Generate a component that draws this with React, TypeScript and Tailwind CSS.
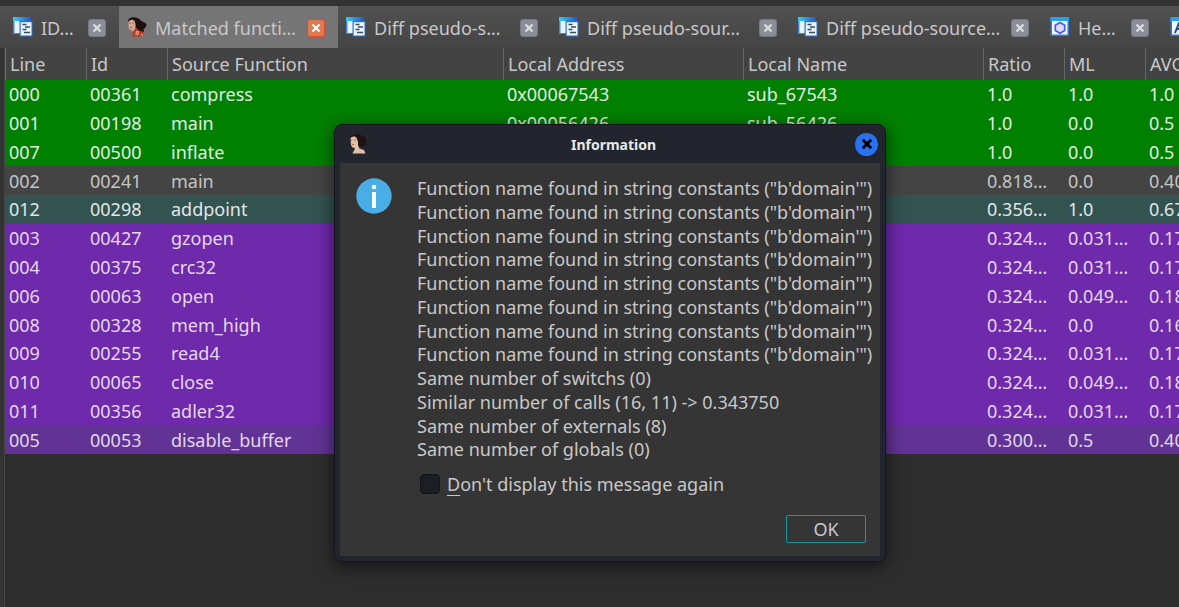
import React from "react";

type Row = { line: string; id: string; fn: string; addr?: string; name?: string; ratio: string; ml: string; avg: string; tone: string };

const GREEN = "bg-[#008000] text-[#e0ece0]";
const GRAY = "bg-[#444444] text-[#c4c4c4]";
const TEAL = "bg-[#335350] text-[#e2e6e6]";
const PURPLE = "bg-[#6f29ab] text-[#e4d8ec]";
const DIM = "bg-[#613394] text-[#e0d8ea]";

const rows: Row[] = [
  { line: "000", id: "00361", fn: "compress", addr: "0x00067543", name: "sub_67543", ratio: "1.0", ml: "1.0", avg: "1.0", tone: GREEN },
  { line: "001", id: "00198", fn: "main", addr: "0x00056426", name: "sub_56426", ratio: "1.0", ml: "0.0", avg: "0.5", tone: GREEN },
  { line: "007", id: "00500", fn: "inflate", ratio: "1.0", ml: "0.0", avg: "0.5", tone: GREEN },
  { line: "002", id: "00241", fn: "main", ratio: "0.818…", ml: "0.0", avg: "0.40", tone: GRAY },
  { line: "012", id: "00298", fn: "addpoint", ratio: "0.356…", ml: "1.0", avg: "0.67", tone: TEAL },
  { line: "003", id: "00427", fn: "gzopen", ratio: "0.324…", ml: "0.031…", avg: "0.17", tone: PURPLE },
  { line: "004", id: "00375", fn: "crc32", ratio: "0.324…", ml: "0.031…", avg: "0.17", tone: PURPLE },
  { line: "006", id: "00063", fn: "open", ratio: "0.324…", ml: "0.049…", avg: "0.18", tone: PURPLE },
  { line: "008", id: "00328", fn: "mem_high", ratio: "0.324…", ml: "0.0", avg: "0.16", tone: PURPLE },
  { line: "009", id: "00255", fn: "read4", ratio: "0.324…", ml: "0.031…", avg: "0.17", tone: PURPLE },
  { line: "010", id: "00065", fn: "close", ratio: "0.324…", ml: "0.049…", avg: "0.18", tone: PURPLE },
  { line: "011", id: "00356", fn: "adler32", ratio: "0.324…", ml: "0.031…", avg: "0.17", tone: PURPLE },
  { line: "005", id: "00053", fn: "disable_buffer", ratio: "0.300…", ml: "0.5", avg: "0.40", tone: DIM },
];

const headers = ["Line", "Id", "Source Function", "Local Address", "Local Name", "Ratio", "ML", "AVG"];

const messages = [
  ...Array<string>(8).fill(`Function name found in string constants ("b'domain'")`),
  "Same number of switchs (0)",
  "Similar number of calls (16, 11) -> 0.343750",
  "Same number of externals (8)",
  "Same number of globals (0)",
];

function DocIcon() {
  return (
    <svg viewBox="0 0 20 20" className="size-5 shrink-0" aria-hidden="true">
      <defs>
        <linearGradient id="bar" x1="0" x2="1">
          <stop offset="0" stopColor="#35d0f5" />
          <stop offset="1" stopColor="#2256c8" />
        </linearGradient>
      </defs>
      <rect x="0" y="0" width="18" height="17" fill="#3c86dc" />
      <rect x="0" y="0" width="18" height="4" fill="url(#bar)" />
      <rect x="1.5" y="4" width="15" height="12" fill="#e6f5ff" />
      <path d="M6.500 4H19.500V19.500H6.500z" fill="#2e70c4" />
      <path d="M7.700 5.200H18.500V18.500H7.700z" fill="#eaf5fd" />
      <path d="M9.500 7.500h4M12 10h5M9.500 12.500h4M11 15.500h6" stroke="#3a4d60" strokeWidth="1.300" />
    </svg>
  );
}

function HexIcon({ letter = false }: { letter?: boolean }) {
  return (
    <svg viewBox="0 0 20 20" className="size-5 shrink-0" aria-hidden="true">
      <rect x="0.500" y="0" width="18.500" height="19" fill="#3676d6" />
      <rect x="0.500" y="0" width="18.500" height="4" fill="#28a0ec" />
      <rect x="2" y="4" width="15.500" height="13.500" fill="#edf7ff" />
      {letter ? (
        <path d="M5 16 9 6h3v10M6 12h6" fill="none" stroke="#254f78" strokeWidth="2" />
      ) : (
        <path d="m10 5.500 4.700 2.700v5.300L10 16.200l-4.700-2.700V8.200z" fill="#dcdcff" stroke="#5058ec" strokeWidth="1.700" />
      )}
    </svg>
  );
}

function PortraitDress() {
  return (
    <svg viewBox="0 0 20 20" className="size-5 shrink-0" aria-hidden="true">
      <path d="M1 4C1 1 6-.6 10 .8c3 1 3.500 3 5.500 4 2 .8 4 1.200 4 3.200-.5 2-1.500 3-3 4l.5 3-4-1-5-4z" fill="#1c1010" />
      <path d="M1.500 5C2.500 2.500 6 2 7.500 4c1.500 2.500 1.300 5.500.5 8l1.500 3-3 1.500L5 13.500C3 13.500 2 12 1.500 9.500z" fill="#d4a88e" />
      <path d="M2 6.300 3.800 6M5.300 6h1.700M3 10.500h2" stroke="#8a513d" strokeWidth=".8" />
      <path d="M9 3c2 2 1 6 1.500 9 2 3 6 1 6-1V5z" fill="#1c1010" />
      <path d="m6 14.500 3-3.500 3 2.500 4.500 2 1 2.500-3 1.500H5z" fill="#b83a24" />
      <path d="m9.500 14.500 2 .5-.5 2.500H9zM14 17l2 1.500" fill="none" stroke="#f5a284" strokeWidth="1.100" />
    </svg>
  );
}

function PortraitBust() {
  return (
    <svg viewBox="0 0 20 20" className="size-5 shrink-0" aria-hidden="true">
      <path d="M3 3.500C5 0 10-.5 13.500 1.500c3 .5 5 2.500 5 5.500s-1.500 5-4 5.500L10 13 7 4z" fill="#1f1312" />
      <path d="M2.500 4.500C4 2 7.500 1.800 9 4.500c1 2 1.500 4.500 1.200 7l1.300 3 4.500 1.500 1.500 3.500h-13c.5-2 2-3 2.500-5.500-2.500 0-3.700-1-4-3.500z" fill="#e2bfa6" />
      <path d="M3 6.300 4.500 6M6.200 6H8M4 10.500h2" stroke="#8a513d" strokeWidth=".8" />
      <path d="M8 3c2 2 2 6 2.500 8.500L14 12l2-5-3-4z" fill="#1f1312" />
    </svg>
  );
}

const tabs = [
  { label: "ID…", width: "w-[114px]", icon: <DocIcon /> },
  { label: "Matched functi…", width: "w-[219px]", icon: <PortraitDress />, active: true },
  { label: "Diff pseudo-s…", width: "w-[213px]", icon: <DocIcon /> },
  { label: "Diff pseudo-sour…", width: "w-[239px]", icon: <DocIcon /> },
  { label: "Diff pseudo-source…", width: "w-[252px]", icon: <DocIcon /> },
  { label: "He…", width: "w-[120px]", icon: <HexIcon /> },
];

function Cross({ className }: { className: string }) {
  return (
    <svg viewBox="0 0 10 10" className={className} aria-hidden="true">
      <path d="m1.500 1.500 7 7m0-7-7 7" stroke="currentColor" strokeWidth="2.400" />
    </svg>
  );
}

export default function App() {
  return (
    <div className="relative flex min-h-screen flex-col overflow-hidden bg-[#333333] pt-1.5 font-['Noto_Sans',sans-serif] text-[18px] text-[#c8c8c8]">
      <nav className="flex h-[42px] overflow-hidden bg-linear-to-b from-[#515151] to-[#444444] pl-[5px]" aria-label="Views">
        {tabs.map((t) => (
          <div key={t.label} className={`flex shrink-0 items-center gap-2 pr-[13px] pl-2 ${t.width} ${t.active ? "bg-[#757575]" : ""}`}>
            {t.icon}
            <a href="#view" className="min-w-0 flex-1 pt-0.5 whitespace-nowrap">{t.label}</a>
            <button
              aria-label={`Close ${t.label}`}
              className={`mt-0.5 flex size-[18px] shrink-0 items-center justify-center rounded-[3px] border ${t.active ? "border-[#e0492c] bg-[#e07a50] text-[#fafafa]" : "border-[#767a85] bg-[#8b8e98] text-[#dcdcdc]"}`}
            >
              <Cross className="size-[10px]" />
            </button>
          </div>
        ))}
        <div className="flex shrink-0 items-center pl-2">
          <HexIcon letter />
        </div>
      </nav>
      <main className="ml-1 flex-1 overflow-hidden border-l border-[#444444] bg-[#2d2d2d]">
        <table className="h-[406px] w-full min-w-[1222px] table-fixed border-separate border-spacing-0 text-left">
          <colgroup>
            <col className="w-[81px]" />
            <col className="w-[81px]" />
            <col className="w-[336px]" />
            <col className="w-[240px]" />
            <col className="w-[240px]" />
            <col className="w-[81px]" />
            <col className="w-[81px]" />
            <col />
          </colgroup>
          <thead>
            <tr className="h-8 bg-[#434343]">
              {headers.map((h) => (
                <th key={h} className="border-l border-[#656565] p-0 pl-1 leading-7 font-normal whitespace-nowrap">{h}</th>
              ))}
            </tr>
          </thead>
          <tbody>
            {rows.map((r) => (
              <tr key={r.line} className={r.tone}>
                {[r.line, r.id, r.fn, r.addr, r.name, r.ratio, r.ml, r.avg].map((v, i) => (
                  <td key={i} className="p-0 pl-1 leading-7 whitespace-nowrap">{v}</td>
                ))}
              </tr>
            ))}
          </tbody>
        </table>
      </main>
      <section
        role="dialog"
        aria-labelledby="dialog-title"
        className="absolute top-[124px] left-[334px] w-[552px] rounded-lg border border-[#15171c] bg-[#22252e] px-[5px] pb-[5px] shadow-[0_4px_18px_rgba(0,0,0,0.6)]"
      >
        <header className="flex h-[38px] items-center justify-between pr-0.5 pl-2">
          <PortraitBust />
          <h1 id="dialog-title" className="pl-1 text-[14px] font-bold text-[#e8e8e8]">Information</h1>
          <button aria-label="Close" className="flex size-[23px] items-center justify-center rounded-full bg-[#2672f0] text-black">
            <Cross className="size-3" />
          </button>
        </header>
        <div className="bg-[#353535] px-[14px] pt-[15px] pb-[13px]">
          <div className="flex pl-0.5">
            <svg viewBox="0 0 36 36" className="size-9 shrink-0" aria-hidden="true">
              <circle cx="18" cy="18" r="17.700" fill="#49aee6" />
              <circle cx="18" cy="9" r="2.300" fill="#fff" />
              <path d="M16 14h4v16h-4z" fill="#fff" />
            </svg>
            <div className="ml-[25px] grid h-[285px] auto-rows-fr">
              {messages.map((m, i) => (
                <p key={i} className="leading-5 whitespace-nowrap">{m}</p>
              ))}
            </div>
          </div>
          <label className="mt-[9px] ml-[66px] flex w-fit items-center gap-[7px] leading-6">
            <input type="checkbox" className="size-5 appearance-none rounded-[4px] border border-[#121417] bg-[#1b1f23]" />
            <span><u className="underline-offset-4">D</u>on't display this message again</span>
          </label>
          <div className="mt-[19px] flex justify-end">
            <button className="h-7 w-20 rounded-[2px] border border-[#139a9b]">OK</button>
          </div>
        </div>
      </section>
    </div>
  );
}
